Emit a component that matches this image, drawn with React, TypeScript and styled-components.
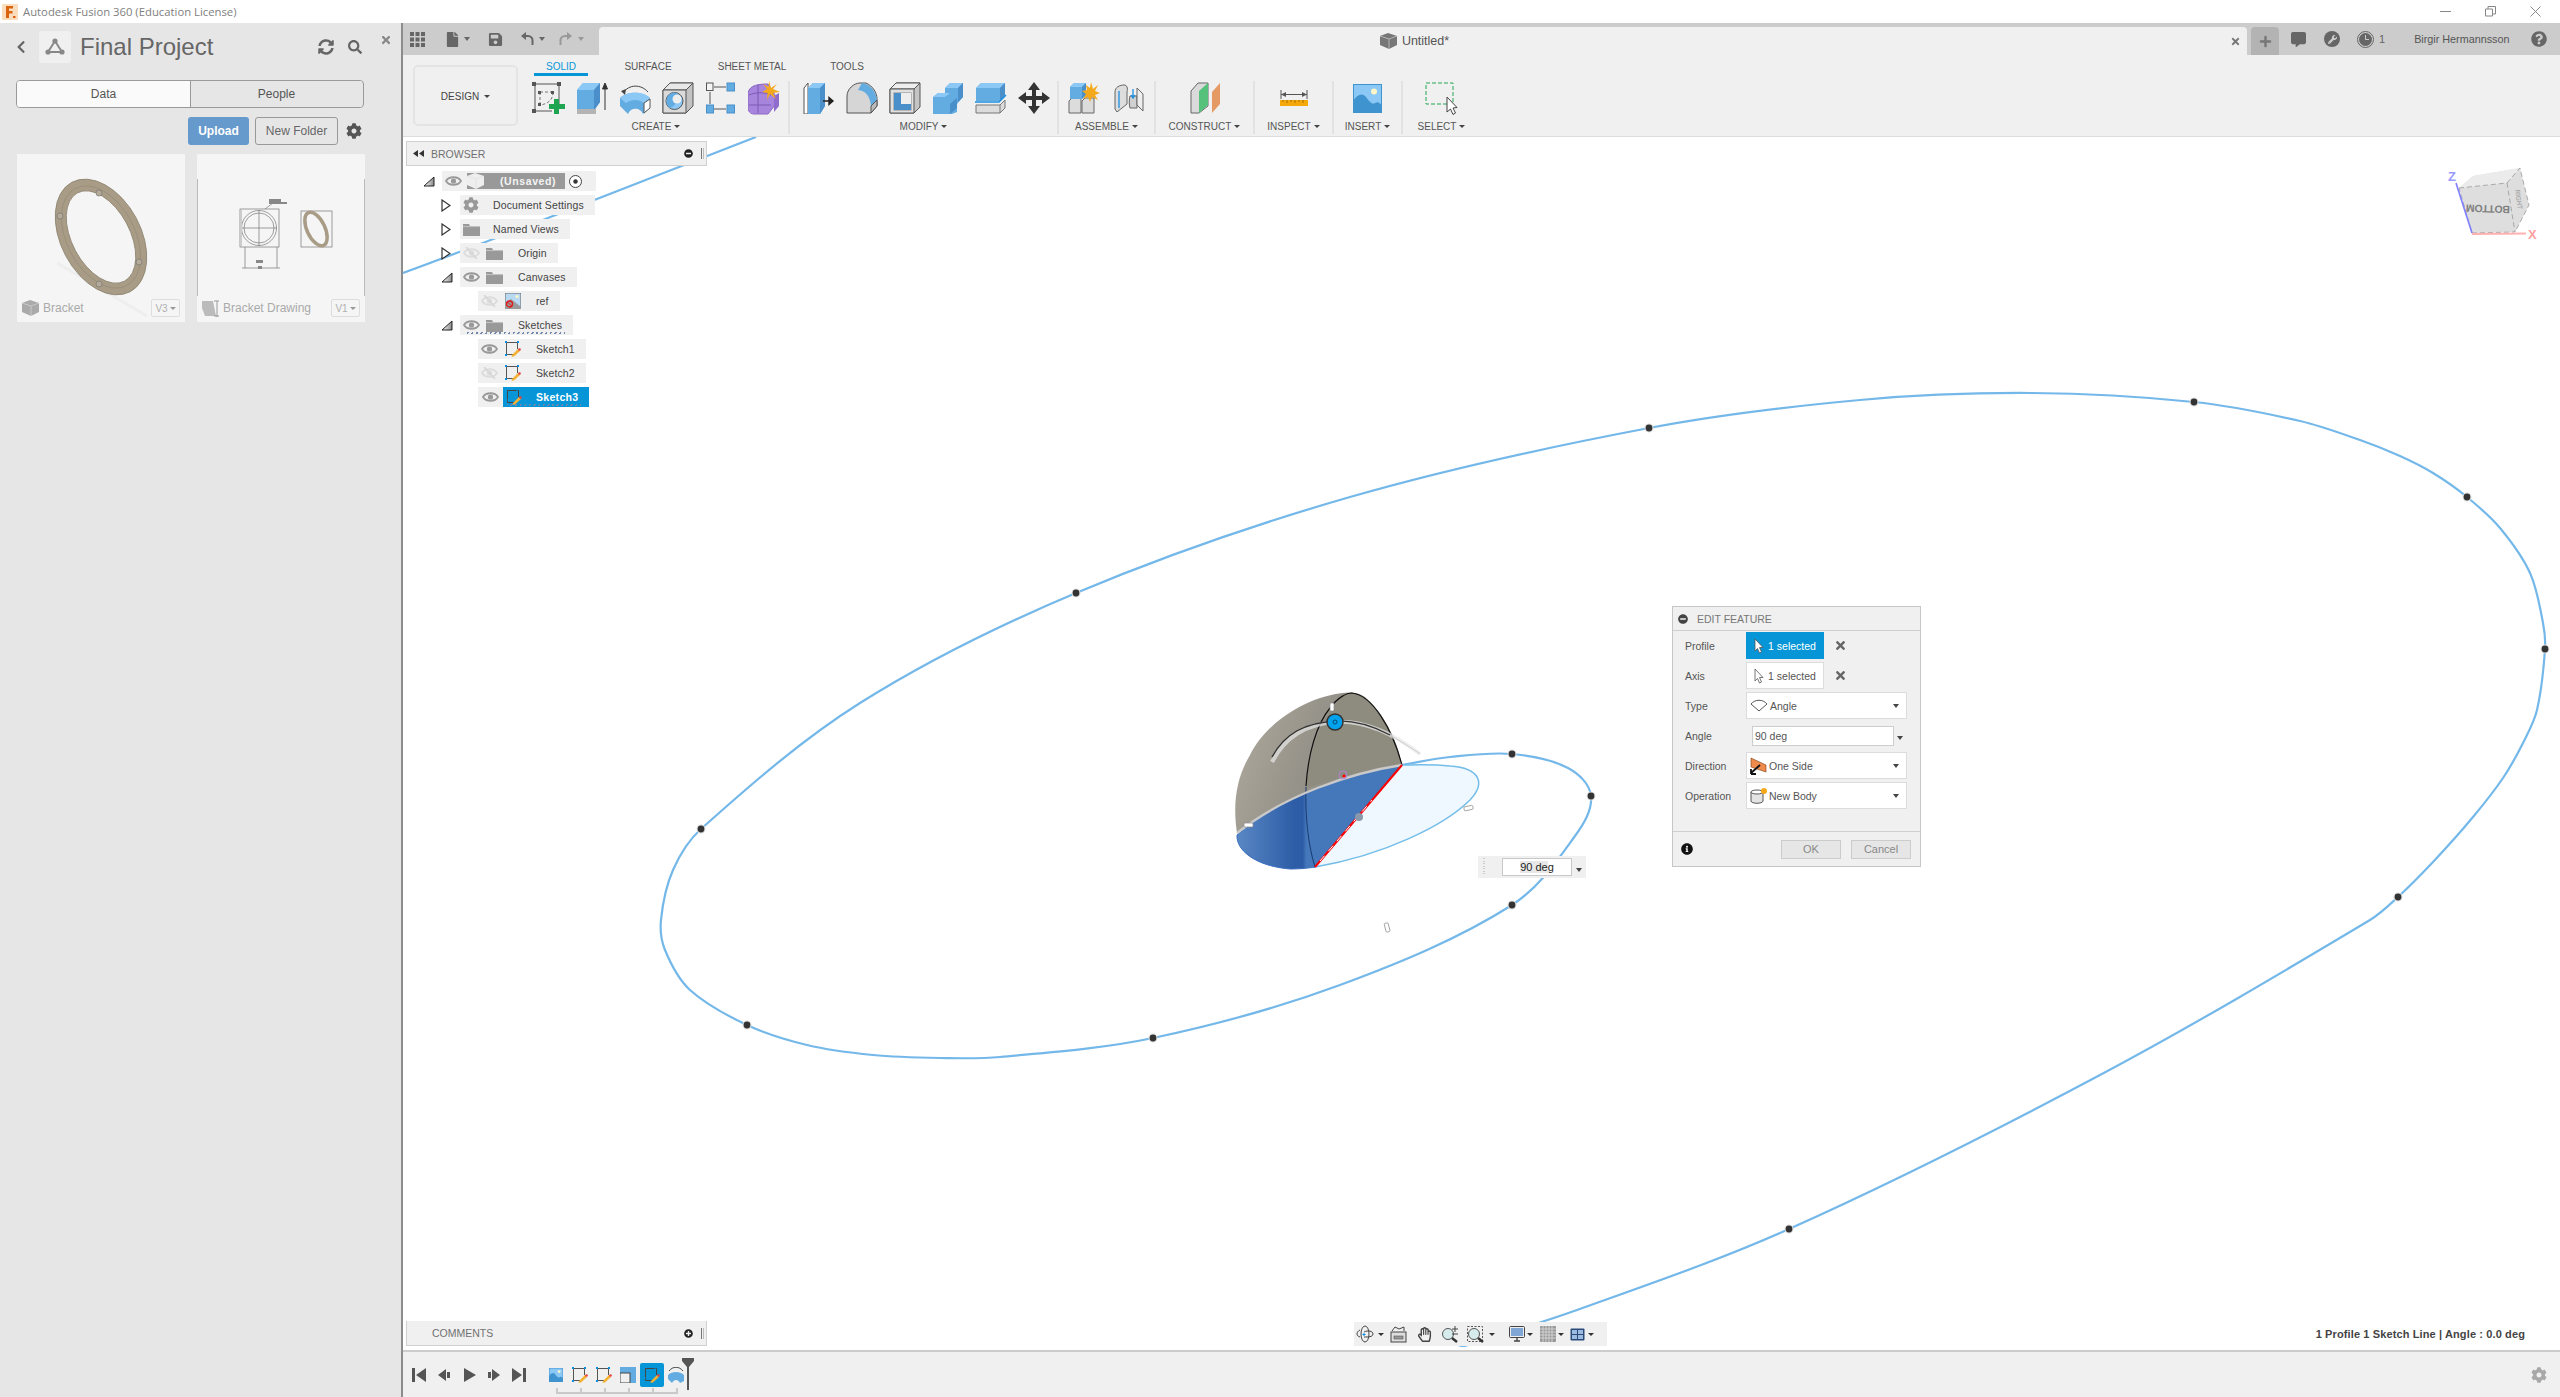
import React from "react";
import styled, { createGlobalStyle } from "styled-components";
import {
  FaCog, FaSearch, FaSyncAlt, FaChevronLeft, FaTimes, FaQuestionCircle, FaWrench,
  FaInfoCircle, FaMinusCircle, FaPlusCircle, FaPlus, FaCommentAlt, FaRegHandPaper, FaFile, FaSave,
} from "react-icons/fa";

const Global = createGlobalStyle`
  html, body { margin: 0; padding: 0; background: #fff; overflow: hidden; }
  body { font-family: "Liberation Sans", Arial, sans-serif; color: #555; }
  * { box-sizing: border-box; }
  svg { display: block; flex: none; }
`;

const Page = styled.div`width: 2560px; height: 1397px; display: flex; flex-direction: column; overflow: hidden;`;

/* ---------- title bar ---------- */
const TitleBar = styled.div`height: 23px; background: #fff; display: flex; align-items: center; padding-left: 2px;`;
const TitleText = styled.span`margin-left: 5px; font: 11.3px "Open Sans", sans-serif; color: #808080; white-space: nowrap;`;
const WindowControls = styled.div`margin-left: auto; display: flex; padding-right: 19px; gap: 34px; align-items: center;`;

/* ---------- body ---------- */
const Body = styled.div`flex: 1; display: flex; min-height: 0;`;

/* ---------- data panel ---------- */
const DataPanel = styled.aside`
  width: 403px; background: #e6e6e6; border-right: 2px solid #8c8c8c;
  display: flex; flex-direction: column; padding: 8px 0 0 16px;
`;
const PanelHead = styled.div`display: flex; align-items: center; height: 32px; color: #666;`;
const BackCell = styled.div`width: 9px; flex: none; display: flex; justify-content: center;`;
const HubBox = styled.div`
  width: 32px; height: 32px; margin-left: 14px; border-radius: 3px; background: #f0f0f0; flex: none;
  display: flex; align-items: center; justify-content: center;
`;
const ProjectName = styled.h1`margin: 0 0 0 9px; width: 238px; flex: none; font: 400 24px "Liberation Sans", sans-serif; color: #666; white-space: nowrap;`;
const HeadIcons = styled.div`display: flex; align-items: center; gap: 14px; color: #666;`;
const CloseIcon = styled.div`margin: -14px 0 0 18px; color: #888;`;
const SegTabs = styled.div`
  width: 348px; height: 28px; margin-top: 17px; display: flex; border: 1.5px solid #9a9a9a; border-radius: 4px; overflow: hidden;
`;
const SegTab = styled.div<{ $active?: boolean; $w: number }>`
  width: ${(p) => p.$w}px; background: ${(p) => (p.$active ? "#fafafa" : "#e6e6e6")};
  display: flex; align-items: center; justify-content: center; font-size: 12px; color: #555;
  & + & { border-left: 1.5px solid #9a9a9a; }
`;
const PanelActions = styled.div`display: flex; align-items: center; height: 28px; margin-top: 9px; padding-left: 172px;`;
const UploadButton = styled.div`
  width: 61px; height: 28px; border-radius: 3px; background: #6699cc; color: #fff; font-weight: 700; font-size: 12px;
  display: flex; align-items: center; justify-content: center;
`;
const FolderButton = styled.div`
  width: 83px; height: 28px; margin-left: 6px; border: 1px solid #999; border-radius: 3px; color: #666; font-size: 12px;
  display: flex; align-items: center; justify-content: center;
`;
const SettingsWrap = styled.div`margin-left: 8px; color: #555;`;
const Cards = styled.div`display: flex; gap: 12px; margin: 9px 0 0 1px;`;
const Card = styled.div`width: 168px; height: 168px; background: #f5f5f5; display: grid; align-items: end;`;
const CardThumb = styled.svg`grid-area: 1 / 1; width: 168px; height: 168px;`;
const CardFooter = styled.div`grid-area: 1 / 1; height: 24px; margin-bottom: 2px; padding: 0 5px; display: flex; align-items: center; gap: 4px; color: #aaa; font-size: 12px;`;
const CardName = styled.span`flex: 1; white-space: nowrap;`;
const VersionBox = styled.div`
  width: 29px; height: 18px; border: 1px solid #ddd; border-radius: 2px; font-size: 10px; color: #b0b0b0;
  display: flex; align-items: center; justify-content: center; gap: 2px;
`;
const Caret = styled.i<{ $c?: string; $s?: number }>`
  display: inline-block; flex: none; width: 0; height: 0;
  border-left: ${(p) => p.$s ?? 3.5}px solid transparent; border-right: ${(p) => p.$s ?? 3.5}px solid transparent;
  border-top: ${(p) => (p.$s ?? 3.5) + 0.5}px solid ${(p) => p.$c ?? "#555"};
`;

/* ---------- workspace ---------- */
const Workspace = styled.main`flex: 1; display: flex; flex-direction: column; min-width: 0;`;
const TopBar = styled.div`height: 32px; background: #ccc; display: flex; align-items: flex-end; flex: none;`;
const QuickAccess = styled.div`width: 196px; height: 32px; display: flex; align-items: center; padding-left: 7px; color: #666;`;
const QuickGap = styled.span<{ $w: number }>`width: ${(p) => p.$w}px; flex: none;`;
const DocTab = styled.div`
  flex: 1; height: 28px; background: #f0f0f0; border-radius: 4px 4px 0 0; display: flex; align-items: center; padding-right: 6px;
`;
const DocTitle = styled.div`flex: 1; display: flex; justify-content: center; align-items: center; gap: 5px; font-size: 12.5px; color: #555;`;
const PlusTab = styled.div`
  width: 28px; height: 28px; margin-left: 4px; background: #b3b3b3; border-radius: 4px 4px 0 0; color: #777;
  display: flex; align-items: center; justify-content: center;
`;
const TopRight = styled.div`width: 281px; height: 32px; display: flex; align-items: center; padding-left: 12px; color: #666; font-size: 11px;`;
const WrenchBadge = styled.div`
  width: 16px; height: 16px; border-radius: 50%; background: #666; color: #ccc; display: flex; align-items: center; justify-content: center; flex: none;
`;
const UserName = styled.span`margin-left: 29px; width: 117px; font-size: 10.8px; color: #555; white-space: nowrap;`;

const Ribbon = styled.div`height: 82px; flex: none; background: #f0f0f0; border-bottom: 1px solid #dcdcdc; display: flex; padding-left: 10px;`;
const DesignButton = styled.div`
  width: 105px; height: 61px; margin-top: 10px; border: 2px solid #e4e4e4; border-radius: 5px;
  display: flex; align-items: center; justify-content: center; gap: 5px; font-size: 10px; color: #444; padding-top: 1px;
`;
const RibbonMain = styled.div`margin-left: 12px; display: flex; flex-direction: column;`;
const RibbonTabs = styled.div`height: 25px; display: flex; padding-left: 4px;`;
const RibbonTab = styled.div<{ $w: number; $active?: boolean }>`
  width: ${(p) => p.$w}px; height: 21px; padding-top: 6px; text-align: center; font-size: 10px; white-space: nowrap;
  color: ${(p) => (p.$active ? "#0696d7" : "#555")};
  border-bottom: 3px solid ${(p) => (p.$active ? "#0696d7" : "transparent")};
`;
const Groups = styled.div`display: flex; height: 53px; margin-top: 1px;`;
const Group = styled.div<{ $w: number; $pr?: number }>`
  width: ${(p) => p.$w}px; flex: none; display: flex; flex-direction: column; align-items: center; justify-content: space-between;
  padding: 0 ${(p) => p.$pr ?? 0}px 2px 0;
  &:not(:last-child) { border-right: 2px solid #e2e2e2; }
`;
const GroupIcons = styled.div<{ $ml?: number }>`display: flex; justify-content: center; margin-left: ${(p) => p.$ml ?? 0}px;`;
const ToolCell = styled.div<{ $w?: number }>`width: ${(p) => p.$w ?? 43}px; height: 34px; display: flex; justify-content: center; align-items: center;`;
const GroupLabel = styled.div`display: flex; align-items: center; gap: 3px; font-size: 10px; color: #555; white-space: nowrap;`;

/* ---------- viewport ---------- */
const Viewport = styled.div`flex: 1; position: relative; background: #fff; overflow: hidden;`;
const CanvasArt = styled.svg`position: absolute; left: 0; top: 0;`;
const PanelBar = styled.div`
  height: 25px; background: #f0f0f0; border: 1px solid #d0d0d0; display: flex; align-items: center; padding-left: 6px;
  font-size: 10.5px; color: #707070;
`;
const PanelBarTitle = styled.span`margin-left: 7px; flex: 1;`;
const PanelGrip = styled.span`width: 3px; height: 11px; margin: 0 2px 0 8px; border-left: 1px solid #777; border-right: 1px solid #bbb;`;
const BrowserPanel = styled.section`position: absolute; left: 3px; top: 4px; width: 301px;`;
const TreeList = styled.div`padding-top: 5px; display: flex; flex-direction: column; gap: 4px;`;
const TreeRow = styled.div<{ $depth: number }>`height: 20px; display: flex; align-items: center; margin-left: ${(p) => 16 + p.$depth * 18}px;`;
const Twisty = styled.div`width: 20px; height: 20px; flex: none; display: flex; align-items: center; padding-left: 1px;`;
const Pill = styled.div`height: 20px; display: flex; align-items: center; background: #f0f0f0; padding-right: 11px; font-size: 10.5px; letter-spacing: .12px; color: #444; white-space: nowrap;`;
const Cell = styled.div<{ $w: number }>`width: ${(p) => p.$w}px; height: 20px; flex: none; display: flex; align-items: center; justify-content: center;`;
const TreeText = styled.span`margin-left: 11px;`;
const RootBox = styled.div`width: 98px; height: 16px; background: #999; display: flex; align-items: center; color: #f4f4f4; font-weight: 700; font-size: 10.5px; letter-spacing: .6px; margin-left: 3px;`;
const RootLabel = styled.span`margin-left: 16px;`;
const Squiggle = styled.div<{ $on?: boolean }>`
  position: relative; display: flex; align-items: center; height: 20px;
  ${(p) => p.$on ? `&::after { content: ""; position: absolute; left: 4px; right: -3px; bottom: 1px; height: 2px;
    background: repeating-linear-gradient(-60deg, #7186ad 0 1.5px, transparent 1.5px 4px); }` : ""}
`;
const SelectedCell = styled.div`height: 20px; width: 86px; background: #0696d7; color: #fff; font-weight: 700; letter-spacing: .3px; display: flex; align-items: center; margin-right: -11px;`;

const CommentsPanel = styled.section`position: absolute; left: 3px; bottom: 4px; width: 301px;`;
const CommentsBar = styled(PanelBar)`border-width: 0 1px 1px 1px; padding-left: 25px;`;
const CommentsTitle = styled.span`flex: 1;`;

const ViewBar = styled.div`
  position: absolute; left: 951px; bottom: 4px; width: 253px; height: 24px; background: #f0f0f0;
  display: flex; align-items: center; color: #444;
`;
const ViewCell = styled.div<{ $w: number; $pl?: number; $gap?: number }>`
  width: ${(p) => p.$w}px; height: 24px; flex: none; display: flex; align-items: center;
  padding-left: ${(p) => p.$pl ?? 0}px; gap: ${(p) => p.$gap ?? 4}px;
`;
const StatusText = styled.div`position: absolute; right: 35px; bottom: 10px; font-size: 11px; font-weight: 700; letter-spacing: .12px; color: #444; white-space: nowrap;`;

const ValueBox = styled.div`
  position: absolute; left: 1075px; top: 719px; width: 108px; height: 22px; background: #f0f0f0;
  display: flex; align-items: center; padding-left: 24px;
`;
const ValueGrip = styled.span`
  position: absolute; left: 5px; top: 2px; width: 2px; height: 18px;
  background: repeating-linear-gradient(180deg, #ccc 0 1px, transparent 1px 2.5px);
`;
const ValueInput = styled.div`
  width: 70px; height: 18px; background: #fff; border: 1px solid #c8c8c8; display: flex; align-items: center; justify-content: center;
  font-size: 11px; color: #222;
`;
const ValueSelect = styled.span`background: #e8e8e8;`;
const ValueArrow = styled.div`margin-left: 4px;`;

const Dialog = styled.section`
  position: absolute; left: 1269px; top: 469px; width: 249px; height: 261px;
  background: #f0f0f0; border: 1.5px solid #c6c6c6; display: flex; flex-direction: column;
`;
const DialogHead = styled.div`height: 24px; flex: none; border-bottom: 1px solid #cfcfcf; display: flex; align-items: center; padding-left: 5px; color: #444; gap: 9px; font-size: 10.5px;`;
const DialogTitle = styled.span`color: #777;`;
const DialogBody = styled.div`flex: 1; display: flex; flex-direction: column; gap: 3px; padding: 1px 0 0 12px;`;
const FieldRow = styled.div`height: 27px; display: flex; align-items: center; font-size: 10.5px; color: #555;`;
const FieldLabel = styled.div`width: 61px; flex: none;`;
const SelectButton = styled.div<{ $on?: boolean }>`
  width: 78px; height: 27px; display: flex; align-items: center; justify-content: center; gap: 4px; font-size: 10.5px;
  background: ${(p) => (p.$on ? "#0696d7" : "#fff")}; color: ${(p) => (p.$on ? "#fff" : "#555")};
  border: 1.5px solid ${(p) => (p.$on ? "#0696d7" : "#dcdcdc")};
`;
const ClearX = styled.div`margin-left: 10px; color: #666;`;
const Dropdown = styled.div`
  width: 161px; height: 27px; background: #fff; border: 1.5px solid #dcdcdc; display: flex; align-items: center; padding: 0 7px 0 3px; font-size: 10.5px; color: #555; gap: 2px;
`;
const DropText = styled.span`flex: 1;`;
const AngleInput = styled.div`width: 142px; height: 20px; margin-left: 6px; background: #fff; border: 1px solid #ccc; display: flex; align-items: center; padding-left: 2px; font-size: 10.5px; color: #555;`;
const AngleArrow = styled.div`margin-left: 3px;`;
const DialogFoot = styled.div`height: 35px; flex: none; border-top: 1px solid #cfcfcf; display: flex; align-items: center; padding: 0 9px 0 8px; color: #111;`;
const FootSpacer = styled.div`flex: 1;`;
const FootButton = styled.div`
  width: 60px; height: 19px; background: #e6e6e6; border: 1px solid #ccc; font-size: 11px; color: #888;
  display: flex; align-items: center; justify-content: center; margin-left: 10px;
`;

/* ---------- timeline ---------- */
const Timeline = styled.footer`height: 47px; flex: none; background: #f0f0f0; border-top: 2px solid #ccc; display: flex; align-items: center; padding-left: 3px;`;
const TransportCell = styled.div`width: 25px; height: 24px; display: flex; align-items: center; justify-content: center;`;
const TimelineTrack = styled.div`margin-left: 13px; display: flex; position: relative; height: 44px; align-items: center;`;
const StepCell = styled.div<{ $on?: boolean }>`
  width: 24px; height: 24px; display: flex; align-items: center; justify-content: center; border-radius: 2px;
  background: ${(p) => (p.$on ? "#0696d7" : "transparent")};
`;
const Connector = styled.div`
  position: absolute; left: 12px; width: 122px; bottom: 3px; height: 6px; border-bottom: 2px solid #c9c9c9;
  background: repeating-linear-gradient(90deg, #c9c9c9 0 2px, transparent 2px 24px);
`;
const Marker = styled.div`margin: -1px 0 0 -6px;`;
const TimelineGear = styled.div`margin-left: auto; padding-right: 13px; color: #a8a8a8;`;

/* ---------- icons ---------- */
const B = "#62ace2", BD = "#4a8fc9", BL = "#8cc8f5", G = "#dadada", GD = "#b4b4b4";

const Eye = ({ off }: { off?: boolean }) => (
  <svg width="17" height="12" viewBox="0 0 17 12">
    <path d="M1 6 C4 1 13 1 16 6 C13 11 4 11 1 6Z" fill="none" stroke={off ? "#dcdcdc" : "#999"} strokeWidth="1.8" />
    <circle cx="8.5" cy="6" r="2.6" fill={off ? "#dcdcdc" : "#999"} />
    {off && <path d="M3 0 L14 12" stroke="#d6d6d6" strokeWidth="1.5" />}
  </svg>
);
const Folder = () => (
  <svg width="17" height="13" viewBox="0 0 17 13"><path d="M0 1 H6 L7 3 H17 V13 H0Z" fill="#999" /><path d="M0 3.6 H17" stroke="#f0f0f0" strokeWidth=".5" /></svg>
);
const TwistOpen = () => (
  <svg width="12" height="11" viewBox="0 0 12 11"><defs><linearGradient id="tw" x1="0" x2="1"><stop offset="0" stopColor="#fff" /><stop offset="1" stopColor="#888" /></linearGradient></defs><path d="M1 10 L11 1 V10Z" fill="url(#tw)" stroke="#222" /></svg>
);
const TwistClosed = () => (
  <svg width="10" height="13" viewBox="0 0 10 13"><path d="M1 1 L9 6.5 L1 12Z" fill="#fff" stroke="#333" strokeWidth="1.2" /></svg>
);
const SketchGlyph = ({ corners = true, dark }: { corners?: boolean; dark?: boolean }) => (
  <svg width="16" height="16" viewBox="0 0 16 16">
    <path d="M1.5 1.5 H12.5 M1.5 1.5 V13.5 M1.5 13.5 H8 M12.5 1.5 V8" fill="none" stroke={dark ? "#444" : "#555"} strokeDasharray={corners ? undefined : "9 1"} />
    {corners && <g fill="#0a8fe0"><rect x="0" y="0" width="2" height="2" /><rect x="12" y="0" width="2" height="2" /><rect x="0" y="13" width="2" height="2" /></g>}
    <path d="M7 14 L13 8 L15 10 L9 15.5 L6.5 15.8Z" fill="#f2b233" />
    <circle cx="14.5" cy="8.5" r="1.3" fill="#e8403a" />
  </svg>
);
const HubIcon = () => (
  <svg width="20" height="18" viewBox="0 0 20 18"><path d="M10 3 L3 14 H17Z" fill="none" stroke="#888" strokeWidth="2" /><circle cx="10" cy="3" r="2.6" fill="#888" /><circle cx="3" cy="14" r="2.6" fill="#888" /><circle cx="17" cy="14" r="2.6" fill="#888" /></svg>
);
const BoxIconGrey = ({ c = "#999" }: { c?: string }) => (
  <svg width="17" height="16" viewBox="0 0 17 16"><path d="M0 3 L8 0 L17 3 V12 L9 16 L0 12Z" fill={c} /><path d="M0 3 L9 6 L17 3 M9 6 V16" stroke="#ddd" strokeWidth=".6" fill="none" /></svg>
);

const IconSketch = () => (
  <svg width="33" height="32" viewBox="0 0 33 32">
    <path d="M3 2 H27 V24 M3 2 V29 H20" fill="none" stroke="#555" />
    <path d="M8 10 H21 M8 10 V22 M21 10 C21 18 16 22 8 23" fill="none" stroke="#777" strokeDasharray="3 2" />
    <g fill="#555"><rect x="0" y="0" width="4" height="4" /><rect x="25" y="0" width="4" height="4" /><rect x="0" y="27" width="4" height="4" /><rect x="6" y="9" width="3" height="3" /><rect x="19" y="9" width="3" height="3" /><rect x="6" y="21" width="3" height="3" /></g>
    <path d="M22 17 H27 V22 H33 V27 H27 V32 H22 V27 H17 V22 H22Z" fill="#1fa552" />
  </svg>
);
const IconExtrude = () => (
  <svg width="32" height="32" viewBox="0 0 32 32">
    <path d="M1 27 H20 V32 H1Z" fill={GD} /><path d="M1 8 L7 1 H24 V20 L19 27 H1Z" fill={B} />
    <path d="M1 8 H18 L24 1 H7Z" fill={BL} /><path d="M18 8 V27 H19 L24 20 V1Z" fill={BD} />
    <path d="M29 28 V4 M26.5 7 L29 1 L31.5 7Z" stroke="#333" fill="#333" />
  </svg>
);
const IconRevolve = () => (
  <svg width="32" height="32" viewBox="0 0 32 32">
    <path d="M4 11 C10 2 22 2 29 10" fill="none" stroke="#444" /><path d="M2 9 L7 7 L6 13Z" fill="#444" />
    <path d="M1 16 C8 9 24 9 31 16 L31 26 L24 32 C22 26 12 24 9 32 L1 24Z" fill={B} />
    <path d="M1 16 C8 9 24 9 31 16 L25 21 C20 17 12 17 7 21Z" fill={BL} />
    <path d="M25 21 L31 17 V26 L25 31Z" fill="#fff" stroke="#555" />
  </svg>
);
const IconHole = () => (
  <svg width="32" height="32" viewBox="0 0 32 32">
    <path d="M1 8 L8 1 H31 V24 L24 31 H1Z" fill="#c2c2c2" stroke="#555" />
    <path d="M1 8 H24 L31 1 H8Z" fill="#e8e8e8" stroke="#555" /><path d="M1 8 H24 V31 H1Z" fill={G} stroke="#555" />
    <circle cx="12.5" cy="19" r="8.5" fill={BL} stroke="#555" /><path d="M12.5 10.5 A8.5 8.5 0 0 0 8 26 C13 24 17 19 16 12 Z" fill={B} />
    <circle cx="15" cy="17" r="4.5" fill="#eee" />
  </svg>
);
const IconPattern = () => (
  <svg width="30" height="32" viewBox="0 0 30 32">
    <path d="M8 5 H20 M4 10 V22 M8 27 H20" stroke="#555" fill="none" />
    <rect x="0.5" y="1" width="6.5" height="7.5" fill="#f4f4f4" stroke="#555" />
    <rect x="21" y="1" width="7.5" height="8" fill={B} stroke={BD} /><rect x="0.5" y="23" width="7" height="8" fill={B} stroke={BD} /><rect x="21" y="23" width="7.5" height="8" fill={B} stroke={BD} />
  </svg>
);
const IconForm = () => (
  <svg width="32" height="34" viewBox="0 0 32 34">
    <path d="M0 14 C0 6 6 3 20 3 L27 14 V24 L20 33 H6 C2 33 0 30 0 26Z" fill="#a885dc" stroke="#8a66c4" />
    <path d="M1 14 C8 11 16 11 23 14 M1 24 H23 M10 4 V32" stroke="#7b59b4" fill="none" />
    <path d="M26 15 L31 12 V25 L26 31Z" fill="#8f6ccc" />
    <path d="M21 0 L23 7 L29 3 L25 8 L32 11 L25 12 L28 18 L22 13 L19 19 L19.5 12 L14 11 L19 8 L15 3 L20.5 6Z" fill="#f4a81c" />
  </svg>
);
const IconPress = () => (
  <svg width="32" height="32" viewBox="0 0 32 32">
    <path d="M1 6 L5 1 V32 H1Z" fill="#fff" stroke="#555" /><path d="M5 6 L10 1 H22 V24 L17 32 H5Z" fill={B} />
    <path d="M5 6 H17 L22 1 H10Z" fill={BL} /><path d="M17 6 V32 L22 24 V1Z" fill={BD} />
    <path d="M20 19 H29 M26 15.5 L30 19 L26 22.5Z" stroke="#222" fill="#222" strokeWidth="1.4" />
  </svg>
);
const IconFillet = () => (
  <svg width="32" height="32" viewBox="0 0 32 32">
    <path d="M1 14 C1 7 8 1 14 1 H20 C27 4 31 11 31 17 V24 L25 31 H1Z" fill="#d6d6d6" stroke="#555" />
    <path d="M16 1 C24 2 30 9 31 18 L25 24 C24 14 20 9 12 8Z" fill={B} /><path d="M25 24 V31 L31 24 V18Z" fill="#bbb" stroke="#555" />
  </svg>
);
const IconShell = () => (
  <svg width="32" height="32" viewBox="0 0 32 32">
    <path d="M1 7 L7 1 H31 V25 L25 31 H1Z" fill="#c4c4c4" stroke="#555" />
    <path d="M1 7 H25 L31 1 H7Z" fill="#eee" stroke="#555" /><path d="M1 7 H25 V31 H1Z" fill="#e0e0e0" stroke="#555" />
    <rect x="5" y="11" width="17" height="17" fill={BL} stroke="#888" /><path d="M5 11 H12 V22 H22 V28 H5Z" fill={BD} />
    <path d="M12 11 H22 V22 H12Z" fill="#eee" />
  </svg>
);
const IconCombine = () => (
  <svg width="32" height="32" viewBox="0 0 32 32">
    <path d="M13 6 L18 1 H31 V15 L25 22 V30 L20 32 H1 V15 L6 11 H13Z" fill={B} />
    <path d="M13 6 H26 L31 1 H18Z M1 15 H13 L18 11 H6Z" fill={BL} /><path d="M26 6 V20 L31 15 V1Z M18 22 V32 L25 26 V16Z" fill={BD} />
  </svg>
);
const IconSplit = () => (
  <svg width="32" height="32" viewBox="0 0 32 32">
    <path d="M1 6 L6 1 H30 V13 L25 19 H1Z" fill={B} /><path d="M1 6 H25 L30 1 H6Z" fill={BL} /><path d="M25 6 V19 L30 13 V1Z" fill={BD} />
    <path d="M0 20 H24 L31 13" stroke="#1c8fe0" strokeWidth="1.5" fill="none" />
    <path d="M1 23 H25 L30 18 V26 L25 31 H1Z" fill="#dcdcdc" stroke="#777" /><path d="M25 23 V31" stroke="#777" />
  </svg>
);
const IconMove = () => (
  <svg width="32" height="32" viewBox="0 0 32 32"><path d="M16 0 L22 8 H18 V14 H24 V10 L32 16 L24 22 V18 H18 V24 H22 L16 32 L10 24 H14 V18 H8 V22 L0 16 L8 10 V14 H14 V8 H10Z" fill="#333" /></svg>
);
const IconNewComp = () => (
  <svg width="32" height="32" viewBox="0 0 32 32">
    <path d="M1 19 L4 16 H13 V31 H1Z M14 19 L17 16 H26 V31 H14Z" fill="#dcdcdc" stroke="#666" />
    <path d="M2 5 L6 1 H18 V13 L14 17 H2Z" fill={B} /><path d="M2 5 H14 L18 1 H6Z" fill={BL} /><path d="M14 5 V17 L18 13 V1Z" fill={BD} />
    <path d="M23 0 L25 7 L30 3 L27 9 L32 11 L27 13 L30 18 L24 15 L22 20 L20 15 L15 17 L18 12 L14 9 L19 8 L18 3 L22 6Z" fill="#f4a81c" />
  </svg>
);
const IconJoint = () => (
  <svg width="30" height="28" viewBox="0 0 30 28">
    <path d="M1 8 C1 3 6 1 10 1 C13 1 14 4 13 8 V20 L3 28 L1 25Z" fill="#ddd" stroke="#666" />
    <path d="M5 7 V17 M5 12 V24" stroke="#1c8fe0" strokeWidth="1.3" />
    <path d="M16 12 H23 V24 H16 C15 20 15 16 16 12 Z" fill="#d0d0d0" stroke="#666" />
    <path d="M23 4 L29 10 V27 L23 21Z" fill="#eee" stroke="#666" />
    <path d="M19 5 V14 M17 11 L19 14 L21 11" stroke="#1c8fe0" fill="none" strokeWidth="1.3" />
  </svg>
);
const IconConstruct = () => (
  <svg width="30" height="32" viewBox="0 0 30 32">
    <path d="M1 9 L8 1 H18 V24 L9 31 H1Z" fill="#dadada" stroke="#666" /><path d="M9 9 L18 1 V23 L9 31Z" fill="#56c17a" />
    <path d="M22 10 L30 1 V22 L22 31Z" fill="#e59a63" />
  </svg>
);
const IconInspect = () => (
  <svg width="28" height="16" viewBox="0 0 28 16">
    <path d="M1 0 V9 M27 0 V9" stroke="#555" /><path d="M1 4.5 H27" stroke="#555" /><path d="M1 4.5 L6 2 V7Z M27 4.5 L22 2 V7Z" fill="#555" />
    <rect x="0" y="10" width="28" height="6" fill="#f5a80a" /><path d="M3 10 V12 M7 10 V13 M11 10 V12 M15 10 V13 M19 10 V12 M23 10 V13" stroke="#a86c00" />
  </svg>
);
const IconInsert = ({ s = 29 }: { s?: number }) => (
  <svg width={s} height={s} viewBox="0 0 29 29">
    <rect width="29" height="29" fill={BL} /><circle cx="21" cy="7.5" r="3" fill="#fdf7c8" />
    <path d="M0 29 V17 C4 11 9 8 13 13 C16 17 19 21 22 19 C25 17 27 19 29 22 V29Z" fill="#3f94cf" />
    <rect x=".5" y=".5" width="28" height="28" fill="none" stroke="#3f94cf" />
  </svg>
);
const IconSelect = () => (
  <svg width="34" height="33" viewBox="0 0 34 33">
    <rect x="1" y="1" width="27" height="21" fill="none" stroke="#22a855" strokeDasharray="4 2" />
    <path d="M22 15 L22 30 L25.5 27 L28 32.5 L30.5 31 L28 26 L32 25.5Z" fill="#fff" stroke="#444" />
  </svg>
);
const CursorIcon = ({ c = "#fff" }: { c?: string }) => (
  <svg width="10" height="16" viewBox="0 0 10 16"><path d="M1 1 V13 L3.5 10.5 L5.5 15 L7.5 14 L5.5 9.5 L9 9.5Z" fill={c} stroke="#555" strokeWidth=".8" /></svg>
);
const GridIcon = () => (
  <svg width="15" height="15" viewBox="0 0 15 15" fill="#666"><rect width="4" height="4" /><rect x="5.5" width="4" height="4" /><rect x="11" width="4" height="4" /><rect y="5.5" width="4" height="4" /><rect x="5.5" y="5.5" width="4" height="4" /><rect x="11" y="5.5" width="4" height="4" /><rect y="11" width="4" height="4" /><rect x="5.5" y="11" width="4" height="4" /><rect x="11" y="11" width="4" height="4" /></svg>
);
const UndoPath = ({ c }: { c: string }) => (
  <g><path d="M3 4 H8 C11 4 12.5 6.5 12.5 8 V13" fill="none" stroke={c} strokeWidth="2" /><path d="M6 0 L1 4 L6 8Z" fill={c} /></g>
);
const UndoIcon = ({ c }: { c: string }) => (
  <svg width="14" height="14" viewBox="0 0 14 14"><UndoPath c={c} /></svg>
);
const RedoIcon = ({ c }: { c: string }) => (
  <svg width="14" height="14" viewBox="0 0 14 14"><g transform="translate(14 0) scale(-1 1)"><UndoPath c={c} /></g></svg>
);
const ClockIcon = () => (
  <svg width="17" height="17" viewBox="0 0 17 17"><circle cx="8.5" cy="8.5" r="8" fill="none" stroke="#666" /><circle cx="8.5" cy="8.5" r="6.5" fill="#666" /><path d="M8.5 4 V8.5 H12" stroke="#ccc" fill="none" /></svg>
);
const FxIcon = () => (
  <svg width="16" height="16" viewBox="0 0 16 16"><rect width="16" height="16" rx="1" fill="#fbdcbd" /><path d="M4 2 H11 V4.5 H7 V7 H10.5 V9.5 H7 V14 H4Z" fill="#d9630f" /><rect x="11" y="12" width="2.5" height="2" fill="#d9630f" /></svg>
);
const AngleGlyph = () => (
  <svg width="18" height="13" viewBox="0 0 18 13"><path d="M1 5 C5 0 13 0 17 5 L9 12Z" fill="#fff" stroke="#555" /></svg>
);
const DirectionGlyph = () => (
  <svg width="17" height="18" viewBox="0 0 17 18"><path d="M1 1 L16 8 V15 L1 10Z" fill="#ee8b4c" stroke="#7a3a10" strokeWidth=".6" /><path d="M1 16 L10 8 M1 17 V12 M1 17 H6" stroke="#111" strokeWidth="1.8" fill="none" /></svg>
);
const BodyGlyph = () => (
  <svg width="17" height="16" viewBox="0 0 17 16"><path d="M1 4 V13 C1 16 13 16 13 13 V4" fill="#e4e4e4" stroke="#555" /><ellipse cx="7" cy="4" rx="6" ry="2" fill="#fff" stroke="#555" /><circle cx="14" cy="3" r="3" fill="#f4a81c" /></svg>
);
const Transport = ({ kind }: { kind: "first" | "prev" | "play" | "next" | "last" }) => {
  const d = {
    first: "M1 1 H4 V15 H1Z M5 8 L15 1 V15Z", prev: "M2 8 L10 2 V14Z M11 5 H14 V11 H11Z", play: "M3 1 L15 8 L3 15Z",
    next: "M2 5 H5 V11 H2Z M6 2 L14 8 L6 14Z", last: "M12 1 H15 V15 H12Z M1 1 L11 8 L1 15Z",
  }[kind];
  return <svg width="16" height="16" viewBox="0 0 16 16"><path d={d} fill="#555" /></svg>;
};
const OrbitIcon = () => (
  <svg width="18" height="18" viewBox="0 0 18 18"><ellipse cx="9" cy="9" rx="4" ry="8" fill="none" stroke="#444" /><path d="M4 5 C0 7 0 11 4 12 M8 7 C12 5 17 6 17 9 C17 12 12 12 8 12" fill="none" stroke="#444" /><path d="M8 8 V11 M6.5 9.5 H9.5" stroke="#0a8fe0" /></svg>
);
const CameraFrameIcon = () => (
  <svg width="17" height="17" viewBox="0 0 17 17"><rect x="1" y="6" width="15" height="10" fill="#ddd" stroke="#444" /><rect x="4" y="10" width="9" height="3" fill="#999" stroke="#444" strokeWidth=".5" /><path d="M2 5 L5 1 L9 3 L14 1 V5" stroke="#444" fill="none" /></svg>
);
const ZoomIcon = ({ plus, box }: { plus?: boolean; box?: boolean }) => (
  <svg width="18" height="17" viewBox="0 0 18 17">
    {box && <rect x=".5" y=".5" width="15" height="15" fill="none" stroke="#555" strokeDasharray="2 1.5" />}
    <circle cx="7" cy="8" r="5.5" fill="#d6ecec" stroke="#555" /><path d="M11 12 L16 16" stroke="#333" strokeWidth="2.4" />
    {plus && <path d="M14 0 V6 M11 3 H17 M11 8 H17" stroke="#444" />}
  </svg>
);
const MonitorIcon = () => (
  <svg width="16" height="16" viewBox="0 0 16 16"><rect x=".5" y=".5" width="15" height="11" rx="1" fill="#eee" stroke="#444" /><rect x="2" y="2" width="12" height="8" fill="#7fa6d4" /><path d="M5 15 H11 M8 12 V15" stroke="#444" strokeWidth="1.4" /></svg>
);
const GridDisplayIcon = () => (
  <svg width="16" height="16" viewBox="0 0 16 16"><rect width="16" height="16" fill="#999" rx="1" /><path d="M3 0 V16 M6 0 V16 M9 0 V16 M12 0 V16 M0 3 H16 M0 6 H16 M0 9 H16 M0 12 H16" stroke="#ddd" strokeWidth=".8" /></svg>
);
const PanesIcon = () => (
  <svg width="15" height="13" viewBox="0 0 15 13"><rect x=".5" y=".5" width="14" height="12" rx="1" fill="#2a4b7a" /><g fill="#9dbbe0"><rect x="2" y="2" width="5" height="4" /><rect x="8" y="2" width="5" height="4" /><rect x="2" y="7" width="5" height="4" /><rect x="8" y="7" width="5" height="4" /></g></svg>
);

/* ---------- curve ---------- */
const splinePoints: [number, number][] = [
  [1402, 765], [1450, 757], [1512, 754], [1568, 768], [1591, 796], [1575, 836], [1512, 905], [1340, 985], [1153, 1038],
  [1000, 1057], [940, 1058], [873, 1055], [807, 1045], [747, 1025], [690, 990], [665, 950], [661, 920], [673, 870], [701, 829],
  [860, 703], [1076, 593], [1350, 497], [1649, 428], [1860, 400], [2030, 393], [2194, 402], [2300, 421], [2360, 440], [2400, 456], [2433, 473], [2467, 497],
  [2500, 528], [2530, 573], [2543, 623], [2545, 649], [2537, 710], [2523, 743], [2503, 778], [2473, 817], [2433, 862], [2398, 897], [2370, 920],
  [2100, 1075], [1789, 1229], [1577, 1310], [1452, 1350],
];
/* Tangent-continuous spline whose handles scale with each segment's length, so uneven point spacing does not kink. */
const smoothPath = (pts: [number, number][]) => {
  const tangent = (i: number): [number, number] => {
    const a = pts[Math.max(i - 1, 0)], b = pts[Math.min(i + 1, pts.length - 1)];
    const dx = b[0] - a[0], dy = b[1] - a[1], l = Math.hypot(dx, dy) || 1;
    return [dx / l, dy / l];
  };
  let d = `M${pts[0][0]} ${pts[0][1]}`;
  for (let i = 0; i < pts.length - 1; i++) {
    const p1 = pts[i], p2 = pts[i + 1], t1 = tangent(i), t2 = tangent(i + 1);
    const h = Math.hypot(p2[0] - p1[0], p2[1] - p1[1]) / 3;
    d += ` C${(p1[0] + t1[0] * h).toFixed(1)} ${(p1[1] + t1[1] * h).toFixed(1)} ${(p2[0] - t2[0] * h).toFixed(1)} ${(p2[1] - t2[1] * h).toFixed(1)} ${p2[0]} ${p2[1]}`;
  }
  return d;
};
const nodes: [number, number][] = [[1512, 754], [1591, 796], [1512, 905], [1153, 1038], [747, 1025], [701, 829], [1076, 593], [1649, 428], [2194, 402], [2467, 497], [2545, 649], [2398, 897], [1789, 1229]];

const Scene = () => (
  <CanvasArt width="2157" height="1210" viewBox="403 137 2157 1210">
    <defs>
      <linearGradient id="domeL" x1="0" y1="0" x2="1" y2="0.3"><stop offset="0" stopColor="#b1ab9e" /><stop offset=".5" stopColor="#96938a" /><stop offset="1" stopColor="#8c897e" /></linearGradient>
      <linearGradient id="blueF" x1="0" x2="1" y1="0" y2="0"><stop offset="0" stopColor="#5a87c4" /><stop offset=".35" stopColor="#2c5da6" /><stop offset=".4" stopColor="#2c5da6" /><stop offset=".42" stopColor="#4577bb" /><stop offset="1" stopColor="#4577bb" /></linearGradient>
    </defs>
    <path d="M403 273 C520 230 640 182 756 137" fill="none" stroke="#74b8ea" strokeWidth="2.2" />
    <path d={smoothPath(splinePoints)} fill="none" stroke="#74b8ea" strokeWidth="2.2" />
    {nodes.map(([x, y]) => (
      <g key={`${x}-${y}`}><circle cx={x} cy={y} r="4.5" fill="#e0e0e0" /><circle cx={x} cy={y} r="3.4" fill="#333" /></g>
    ))}
    <path d="M1315 867 C1385 855 1445 825 1470 800 C1486 783 1480 768 1450 766 C1430 764 1415 765 1402 765Z" fill="#eef8fe" stroke="#74bde8" strokeWidth="1.5" />
    <path d="M1237 833 C1232 800 1238 775 1250 755 C1262 730 1290 708 1320 698 C1340 692 1355 690 1365 697 C1385 715 1397 740 1402 765 C1350 775 1280 800 1237 833Z" fill="url(#domeL)" />
    <path d="M1306 788 C1310 750 1318 725 1335 705 C1342 695 1350 692 1352 693 C1375 695 1395 735 1402 765 C1370 770 1335 778 1306 788Z" fill="#8e8b7f" />
    <path d="M1306 786 C1308 755 1316 725 1330 708 C1338 697 1347 693 1352 693 C1372 695 1392 728 1402 765" fill="none" stroke="#111" strokeWidth="1.2" />
    <path d="M1402 765 C1350 773 1285 795 1237 835 C1236 850 1255 866 1290 869 C1300 869 1310 868 1315 867Z" fill="url(#blueF)" stroke="#3a6fc0" />
    <path d="M1306 787 C1305 815 1308 845 1315 867" fill="none" stroke="#183a70" strokeWidth="1" />
    <path d="M1402 765 C1350 773 1285 795 1237 833" fill="none" stroke="#c9c9c9" strokeWidth="2.4" />
    <path d="M1315 867 L1402 765" stroke="#f00" strokeWidth="2" />
    <path d="M1320 861 L1372 800" stroke="#fff" strokeWidth="1" strokeDasharray="7 6" />
    <circle cx="1343" cy="775" r="4" fill="none" stroke="#b084d8" /><circle cx="1344" cy="776" r="1.6" fill="#f00" />
    <circle cx="1359" cy="817" r="4" fill="#8b97aa" />
    <path d="M1272 762 C1285 737 1305 724 1335 722 C1365 720 1395 735 1420 754" fill="none" stroke="#e8e8e8" strokeWidth="4" opacity=".7" />
    <path d="M1272 757 C1285 733 1305 723 1335 721" fill="none" stroke="#333" strokeWidth="1.4" />
    <path d="M1335 721 C1355 720 1375 727 1390 735" fill="none" stroke="#333" strokeWidth="1.4" />
    <path d="M1390 735 C1400 741 1412 748 1420 754" fill="none" stroke="#ccc" strokeWidth="1" />
    <circle cx="1335" cy="722" r="8" fill="#00a2ed" stroke="#333" strokeWidth="1.5" /><circle cx="1335" cy="722" r="2" fill="none" stroke="#06496e" />
    <g fill="#fff" stroke="#888" strokeWidth=".7">
      <rect x="1244" y="823" width="9" height="4" rx="1" /><rect x="1464" y="806" width="9" height="4" rx="1" transform="rotate(-12 1469 808)" />
      <rect x="1330" y="703" width="4" height="8" rx="1" /><rect x="1385" y="923" width="4" height="9" rx="1" transform="rotate(-15 1387 927)" />
    </g>
    <g>
      <path d="M2459 188 L2473 176 L2520 168 L2529 205 L2515 232 L2472 233Z" fill="#dedede" />
      <path d="M2459 188 L2473 176 L2520 168 L2507 183Z" fill="#ebebeb" />
      <path d="M2459 188 L2507 183 L2515 232 L2472 233Z M2507 183 L2520 168 L2529 205 L2515 232" fill="none" stroke="#999" strokeDasharray="5 3" strokeWidth=".8" />
      <text transform="translate(2510 206) rotate(182)" fontFamily="Liberation Sans" fontWeight="700" fontSize="10.5" fill="#808080" textLength="44">BOTTOM</text>
      <text transform="translate(2515 190) rotate(82) scale(.9 1)" fontFamily="Liberation Sans" fontWeight="700" fontSize="7" fill="#aaa">RIGHT</text>
      <path d="M2456 183 L2472 233" stroke="#7f7fff" strokeWidth="1.6" />
      <path d="M2472 234 L2526 233.5" stroke="#ffb0b0" strokeWidth="1.8" />
      <text x="2448" y="181" fontFamily="Liberation Sans" fontWeight="700" fontSize="13" fill="#9a9aff">Z</text>
      <text x="2528" y="239" fontFamily="Liberation Sans" fontWeight="700" fontSize="13" fill="#ffa0a0">X</text>
    </g>
  </CanvasArt>
);

const TreeEntry = ({ depth, twist, children }: { depth: number; twist?: "open" | "closed"; children: React.ReactNode }) => (
  <TreeRow $depth={depth}>
    <Twisty>{twist === "open" ? <TwistOpen /> : twist === "closed" ? <TwistClosed /> : null}</Twisty>
    {children}
  </TreeRow>
);
const ToolGroup = ({ w, label, iconsMl, pr, children }: { w: number; label: string; iconsMl?: number; pr?: number; children: React.ReactNode }) => (
  <Group $w={w} $pr={pr}>
    <GroupIcons $ml={iconsMl}>{children}</GroupIcons>
    <GroupLabel>{label}<Caret $s={3} $c="#444" /></GroupLabel>
  </Group>
);

export default function App() {
  return (
    <Page>
      <Global />
      <TitleBar>
        <FxIcon />
        <TitleText>Autodesk Fusion 360 (Education License)</TitleText>
        <WindowControls>
          <svg width="11" height="11" viewBox="0 0 11 11"><path d="M0 5.5 H11" stroke="#888" /></svg>
          <svg width="11" height="11" viewBox="0 0 11 11"><path d="M.5 3 H7.5 V10 H.5Z M3 3 V.5 H10.5 V8 H7.5" fill="none" stroke="#888" /></svg>
          <svg width="11" height="11" viewBox="0 0 11 11"><path d="M.5 .5 L10.5 10.5 M10.5 .5 L.5 10.5" stroke="#888" /></svg>
        </WindowControls>
      </TitleBar>
      <Body>
        <DataPanel>
          <PanelHead>
            <BackCell><FaChevronLeft size={14} /></BackCell>
            <HubBox><HubIcon /></HubBox>
            <ProjectName>Final Project</ProjectName>
            <HeadIcons><FaSyncAlt size={16} /><FaSearch size={14} /></HeadIcons>
            <CloseIcon><FaTimes size={12} /></CloseIcon>
          </PanelHead>
          <SegTabs>
            <SegTab $active $w={173}>Data</SegTab>
            <SegTab $w={172}>People</SegTab>
          </SegTabs>
          <PanelActions>
            <UploadButton>Upload</UploadButton>
            <FolderButton>New Folder</FolderButton>
            <SettingsWrap><FaCog size={16} /></SettingsWrap>
          </PanelActions>
          <Cards>
            <Card>
              <CardThumb viewBox="0 0 168 168">
                <path d="M40 109 L130 162" stroke="#eeeeee" strokeWidth="3" />
                <g transform="rotate(-28 84 83)">
                  <path fillRule="evenodd" d="M44 83 a40 62 0 1 0 80 0 a40 62 0 1 0 -80 0Z M55 83 a29 50 0 1 0 58 0 a29 50 0 1 0 -58 0Z" fill="#a99c86" stroke="#8d8471" strokeWidth=".8" />
                  <ellipse cx="84" cy="83" rx="34" ry="55" fill="none" stroke="#8d8471" strokeWidth=".5" />
                </g>
                <g fill="#b5aa97" stroke="#777" strokeWidth=".7"><circle cx="82" cy="39" r="3" /><circle cx="43" cy="62" r="3" /><circle cx="122" cy="108" r="3" /><circle cx="82" cy="130" r="3" /></g>
              </CardThumb>
              <CardFooter><BoxIconGrey c="#aaa" /><CardName>Bracket</CardName><VersionBox>V3<Caret $c="#999" $s={3} /></VersionBox></CardFooter>
            </Card>
            <Card>
              <CardThumb viewBox="0 0 168 168">
                <path d="M.5 25 V142 M167.5 25 V142" stroke="#bbb" />
                <g fill="none" stroke="#777" strokeWidth=".7">
                  <rect x="43" y="55" width="39" height="38" />
                  <circle cx="62" cy="74" r="17.5" /><circle cx="62" cy="74" r="15" />
                  <path d="M45 74 H80 M62 56 V92 M48 93 V114 M80 93 V114 M45 114 H83 M68 55 L76 49" />
                  <rect x="104" y="57" width="31" height="36" />
                </g>
                <rect x="72" y="45" width="12" height="5" fill="#888" /><rect x="84" y="48" width="6" height="2" fill="#888" />
                <rect x="59" y="106" width="7" height="3" fill="#888" /><rect x="61" y="112" width="4" height="3" fill="#888" />
                <rect x="43" y="56" width="2" height="36" fill="#ccc" />
                <ellipse cx="119" cy="75" rx="9" ry="18" transform="rotate(-25 119 75)" fill="none" stroke="#a99c86" strokeWidth="3.5" />
              </CardThumb>
              <CardFooter>
                <svg width="17" height="17" viewBox="0 0 17 17"><path d="M0 1 H11 L14 16 H3 L0 8Z" fill="#bbb" /><path d="M15 1 V17 M12 1 H17 M12 16 H17" stroke="#999" fill="none" /></svg>
                <CardName>Bracket Drawing</CardName><VersionBox>V1<Caret $c="#999" $s={3} /></VersionBox>
              </CardFooter>
            </Card>
          </Cards>
        </DataPanel>

        <Workspace>
          <TopBar>
            <QuickAccess>
              <GridIcon /><QuickGap $w={20} />
              <FaFile size={15} /><QuickGap $w={4} /><Caret $c="#666" $s={3.5} /><QuickGap $w={18} />
              <FaSave size={15} /><QuickGap $w={17} />
              <UndoIcon c="#666" /><QuickGap $w={5} /><Caret $c="#666" $s={3.5} /><QuickGap $w={14} />
              <RedoIcon c="#999" /><QuickGap $w={5} /><Caret $c="#999" $s={3.5} />
            </QuickAccess>
            <DocTab>
              <DocTitle><BoxIconGrey c="#777" />Untitled*</DocTitle>
              <FaTimes size={11} color="#777" />
            </DocTab>
            <PlusTab><FaPlus size={13} /></PlusTab>
            <TopRight>
              <FaCommentAlt size={15} /><QuickGap $w={18} />
              <WrenchBadge><FaWrench size={9} /></WrenchBadge><QuickGap $w={17} />
              <ClockIcon /><QuickGap $w={5} />1
              <UserName>Birgir Hermannsson</UserName>
              <FaQuestionCircle size={16} />
            </TopRight>
          </TopBar>

          <Ribbon>
            <DesignButton>DESIGN<Caret $c="#444" $s={3} /></DesignButton>
            <RibbonMain>
              <RibbonTabs>
                <RibbonTab $w={54} $active>SOLID</RibbonTab>
                <RibbonTab $w={120}>SURFACE</RibbonTab>
                <RibbonTab $w={88}>SHEET METAL</RibbonTab>
                <RibbonTab $w={102}>TOOLS</RibbonTab>
              </RibbonTabs>
              <Groups>
                <ToolGroup w={260} pr={6} label="CREATE">
                  <ToolCell><IconSketch /></ToolCell><ToolCell><IconExtrude /></ToolCell><ToolCell><IconRevolve /></ToolCell>
                  <ToolCell><IconHole /></ToolCell><ToolCell><IconPattern /></ToolCell><ToolCell><IconForm /></ToolCell>
                </ToolGroup>
                <ToolGroup w={269} iconsMl={6} label="MODIFY">
                  <ToolCell><IconPress /></ToolCell><ToolCell><IconFillet /></ToolCell><ToolCell><IconShell /></ToolCell>
                  <ToolCell><IconCombine /></ToolCell><ToolCell><IconSplit /></ToolCell><ToolCell><IconMove /></ToolCell>
                </ToolGroup>
                <ToolGroup w={97} label="ASSEMBLE"><ToolCell $w={45}><IconNewComp /></ToolCell><ToolCell $w={45}><IconJoint /></ToolCell></ToolGroup>
                <ToolGroup w={99} label="CONSTRUCT"><ToolCell><IconConstruct /></ToolCell></ToolGroup>
                <ToolGroup w={79} label="INSPECT"><ToolCell><IconInspect /></ToolCell></ToolGroup>
                <ToolGroup w={69} label="INSERT"><ToolCell><IconInsert /></ToolCell></ToolGroup>
                <ToolGroup w={77} label="SELECT"><ToolCell><IconSelect /></ToolCell></ToolGroup>
              </Groups>
            </RibbonMain>
          </Ribbon>

          <Viewport>
            <Scene />
            <BrowserPanel>
              <PanelBar>
                <svg width="11" height="7" viewBox="0 0 11 7"><path d="M5 0 L0 3.5 L5 7Z M11 0 L6 3.5 L11 7Z" fill="#333" /></svg>
                <PanelBarTitle>BROWSER</PanelBarTitle>
                <FaMinusCircle size={9} color="#222" /><PanelGrip />
              </PanelBar>
              <TreeList>
                <TreeEntry depth={0} twist="open">
                  <Pill>
                    <Cell $w={22}><Eye /></Cell>
                    <RootBox><BoxIconGrey c="#eee" /><RootLabel>(Unsaved)</RootLabel></RootBox>
                    <Cell $w={20}><svg width="13" height="13" viewBox="0 0 13 13"><circle cx="6.5" cy="6.5" r="6" fill="#fff" stroke="#444" /><circle cx="6.5" cy="6.5" r="2.2" fill="#333" /></svg></Cell>
                  </Pill>
                </TreeEntry>
                <TreeEntry depth={1} twist="closed"><Pill><Cell $w={22}><FaCog size={16} color="#999" /></Cell><TreeText>Document Settings</TreeText></Pill></TreeEntry>
                <TreeEntry depth={1} twist="closed"><Pill><Cell $w={22}><Folder /></Cell><TreeText>Named Views</TreeText></Pill></TreeEntry>
                <TreeEntry depth={1} twist="closed"><Pill><Cell $w={22}><Eye off /></Cell><Cell $w={25}><Folder /></Cell><TreeText>Origin</TreeText></Pill></TreeEntry>
                <TreeEntry depth={1} twist="open"><Pill><Cell $w={22}><Eye /></Cell><Cell $w={25}><Folder /></Cell><TreeText>Canvases</TreeText></Pill></TreeEntry>
                <TreeEntry depth={2}>
                  <Pill><Cell $w={22}><Eye off /></Cell><Cell $w={25}>
                    <svg width="16" height="16" viewBox="0 0 16 16"><rect width="16" height="16" fill="#b9d8f2" stroke="#666" /><path d="M0 16 V10 L6 6 L16 14 V16Z" fill="#9a9a9a" /><circle cx="4.5" cy="11" r="3" fill="none" stroke="#e01818" strokeWidth="1.3" /><path d="M2.5 9 L6.5 13" stroke="#e01818" /><circle cx="12" cy="3.5" r="1.6" fill="#fdf7c8" /></svg>
                  </Cell><TreeText>ref</TreeText></Pill>
                </TreeEntry>
                <TreeEntry depth={1} twist="open"><Pill><Squiggle $on><Cell $w={22}><Eye /></Cell><Cell $w={25}><Folder /></Cell><TreeText>Sketches</TreeText></Squiggle></Pill></TreeEntry>
                <TreeEntry depth={2}><Pill><Cell $w={22}><Eye /></Cell><Cell $w={25}><SketchGlyph /></Cell><TreeText>Sketch1</TreeText></Pill></TreeEntry>
                <TreeEntry depth={2}><Pill><Cell $w={22}><Eye off /></Cell><Cell $w={25}><SketchGlyph /></Cell><TreeText>Sketch2</TreeText></Pill></TreeEntry>
                <TreeEntry depth={2}>
                  <Pill>
                    <Cell $w={25}><Eye /></Cell>
                    <SelectedCell><Squiggle $on><Cell $w={22}><SketchGlyph corners={false} dark /></Cell><TreeText>Sketch3</TreeText></Squiggle></SelectedCell>
                  </Pill>
                </TreeEntry>
              </TreeList>
            </BrowserPanel>

            <ValueBox>
              <ValueGrip />
              <ValueInput><ValueSelect>90 de</ValueSelect>g</ValueInput>
              <ValueArrow><Caret $c="#444" $s={3.5} /></ValueArrow>
            </ValueBox>

            <Dialog>
              <DialogHead><FaMinusCircle size={10} /><DialogTitle>EDIT FEATURE</DialogTitle></DialogHead>
              <DialogBody>
                <FieldRow><FieldLabel>Profile</FieldLabel><SelectButton $on><CursorIcon />1 selected</SelectButton><ClearX><FaTimes size={13} /></ClearX></FieldRow>
                <FieldRow><FieldLabel>Axis</FieldLabel><SelectButton><CursorIcon />1 selected</SelectButton><ClearX><FaTimes size={13} /></ClearX></FieldRow>
                <FieldRow><FieldLabel>Type</FieldLabel><Dropdown><AngleGlyph /><DropText>Angle</DropText><Caret $c="#444" /></Dropdown></FieldRow>
                <FieldRow><FieldLabel>Angle</FieldLabel><AngleInput>90 deg</AngleInput><AngleArrow><Caret $c="#444" /></AngleArrow></FieldRow>
                <FieldRow><FieldLabel>Direction</FieldLabel><Dropdown><DirectionGlyph /><DropText>One Side</DropText><Caret $c="#444" /></Dropdown></FieldRow>
                <FieldRow><FieldLabel>Operation</FieldLabel><Dropdown><BodyGlyph /><DropText>New Body</DropText><Caret $c="#444" /></Dropdown></FieldRow>
              </DialogBody>
              <DialogFoot>
                <FaInfoCircle size={12} /><FootSpacer />
                <FootButton>OK</FootButton><FootButton>Cancel</FootButton>
              </DialogFoot>
            </Dialog>

            <CommentsPanel>
              <CommentsBar><CommentsTitle>COMMENTS</CommentsTitle><FaPlusCircle size={9} color="#222" /><PanelGrip /></CommentsBar>
            </CommentsPanel>

            <ViewBar>
              <ViewCell $w={34} $pl={2}><OrbitIcon /><Caret $c="#333" $s={3} /></ViewCell>
              <ViewCell $w={20} $pl={2}><CameraFrameIcon /></ViewCell>
              <ViewCell $w={32} $pl={9}><FaRegHandPaper size={15} /></ViewCell>
              <ViewCell $w={20} $pl={1}><ZoomIcon plus /></ViewCell>
              <ViewCell $w={45} $pl={7}><ZoomIcon box /><Caret $c="#333" $s={3} /></ViewCell>
              <ViewCell $w={35} $pl={4} $gap={2}><MonitorIcon /><Caret $c="#333" $s={3} /></ViewCell>
              <ViewCell $w={30} $gap={2}><GridDisplayIcon /><Caret $c="#333" $s={3} /></ViewCell>
              <ViewCell $w={34} $gap={3}><PanesIcon /><Caret $c="#333" $s={3} /></ViewCell>
            </ViewBar>

            <StatusText>1 Profile 1 Sketch Line | Angle : 0.0 deg</StatusText>
          </Viewport>

          <Timeline>
            <TransportCell><Transport kind="first" /></TransportCell>
            <TransportCell><Transport kind="prev" /></TransportCell>
            <TransportCell><Transport kind="play" /></TransportCell>
            <TransportCell><Transport kind="next" /></TransportCell>
            <TransportCell><Transport kind="last" /></TransportCell>
            <TimelineTrack>
              <StepCell><IconInsert s={14} /></StepCell>
              <StepCell><SketchGlyph /></StepCell>
              <StepCell><SketchGlyph /></StepCell>
              <StepCell>
                <svg width="16" height="16" viewBox="0 0 16 16"><rect width="16" height="16" fill={B} /><rect x="0" y="6" width="10" height="10" fill="#f0f0f0" stroke="#444" /></svg>
              </StepCell>
              <StepCell $on><SketchGlyph corners={false} dark /></StepCell>
              <StepCell>
                <svg width="16" height="16" viewBox="0 0 16 16"><path d="M1 4 C5 -1 11 -1 15 4" fill="none" stroke="#444" /><path d="M0 8 C4 4 12 4 16 8 V14 L12 16 C10 12 6 12 4 16 L0 12Z" fill={B} /></svg>
              </StepCell>
              <Connector />
              <Marker>
                <svg width="12" height="32" viewBox="0 0 12 32"><path d="M0 0 H12 V3 L7 9 V32 H5 V9 L0 3Z" fill="#555" /></svg>
              </Marker>
            </TimelineTrack>
            <TimelineGear><FaCog size={16} /></TimelineGear>
          </Timeline>
        </Workspace>
      </Body>
    </Page>
  );
}
